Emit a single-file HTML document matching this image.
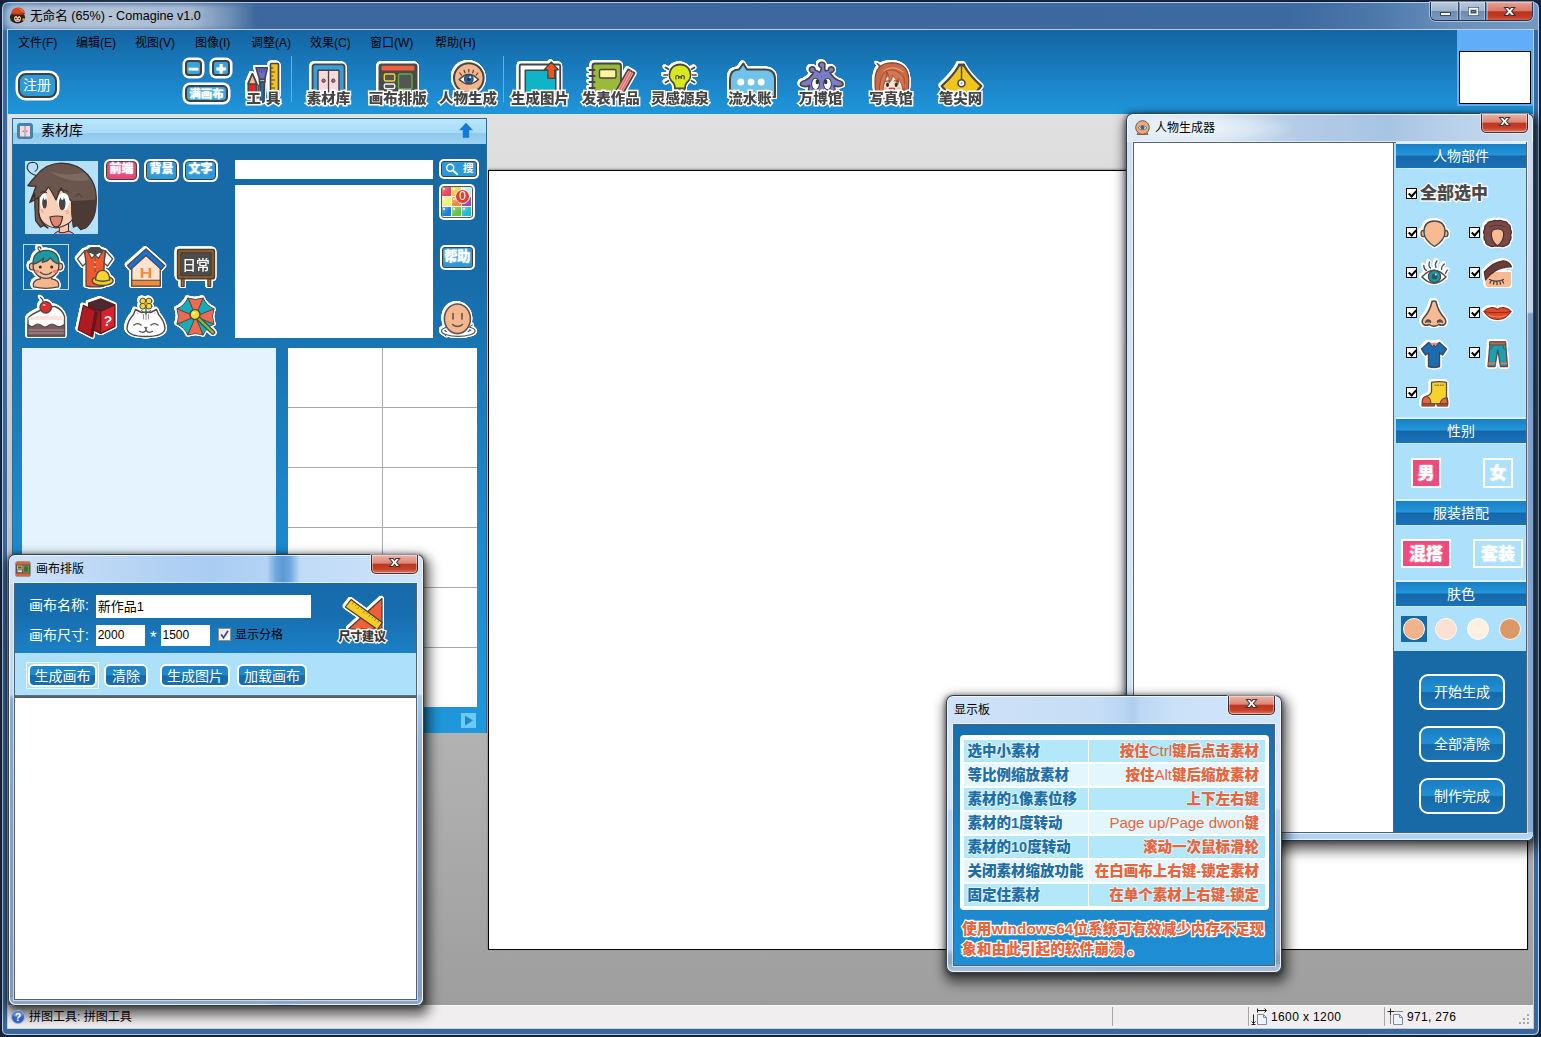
<!DOCTYPE html>
<html lang="zh-CN"><head><meta charset="utf-8"><title>无命名 (65%) - Comagine v1.0</title>
<style>
*{box-sizing:border-box;margin:0;padding:0}
html,body{width:1541px;height:1037px;overflow:hidden;background:#15243c}
body{font-family:"Liberation Sans","Noto Sans CJK SC",sans-serif;font-size:12px;color:#000;position:relative}
.a{position:absolute}
.t{position:absolute;white-space:nowrap}
svg{position:absolute;overflow:visible}
/* main frame */
#frame{position:absolute;left:1px;top:1px;width:1539px;height:1035px;border-radius:7px 7px 6px 6px;background:linear-gradient(90deg,#5a84b3 0,#41699c 40px,#3c689d 300px,#3c699e 1280px,#4b77a9 1370px,#688fbb 1450px,#7499c1 1541px);border:1px solid #101c30;box-shadow:inset 0 0 0 1px rgba(205,228,250,.8)}
#frame .lower{position:absolute;left:1px;right:1px;top:28px;bottom:1px;border-radius:0 0 5px 5px;background:linear-gradient(180deg,#3b699e 0,#3a6698 100%)}
#titleglow{position:absolute;left:3px;top:2px;width:252px;height:26px;border-radius:9px;background:linear-gradient(90deg,rgba(255,255,255,.42) 0,rgba(255,255,255,.56) 10%,rgba(255,255,255,.6) 45%,rgba(255,255,255,.54) 74%,rgba(255,255,255,.26) 89%,rgba(255,255,255,0) 100%);filter:blur(2.5px)}
#title{left:30px;top:8px;font-size:12.6px;line-height:16px;color:#000}
#clientedge{position:absolute;left:7px;top:29px;width:1527px;height:1000px;border:1px solid rgba(190,215,240,.85);background:#a8a8a8}
#toolbar{position:absolute;left:8px;top:30px;width:1525px;height:84px;background:linear-gradient(180deg,#14659f 0,#1567a5 4%,#1a7dc0 50%,#1f96da 100%);box-shadow:0 1px 0 rgba(190,225,248,.75)}
#workspace{position:absolute;left:8px;top:114px;width:1525px;height:891px;background:linear-gradient(180deg,#e1e1e1 0,#9e9e9e 100%)}
#status{position:absolute;left:8px;top:1005px;width:1525px;height:23px;background:#f0eeee;border-top:1px solid #f8f8f8}
.menu{top:36px;font-size:12px;line-height:14px;color:#000}
.cbtn{position:absolute;border:2px solid #3f3f3f;border-radius:6px;box-shadow:0 0 0 2.5px #fff;background:#2b99da;color:#fff;text-align:center}
.tl{position:absolute;top:88px;width:90px;text-align:center;font-size:14.5px;font-weight:900;color:#454545;-webkit-text-stroke:3px #fff;paint-order:stroke fill;line-height:20px;white-space:nowrap;transform:scaleY(.93);transform-origin:50% 85%}
.ol{filter:drop-shadow(1px 0 0 #fff) drop-shadow(-1px 0 0 #fff) drop-shadow(0 1px 0 #fff) drop-shadow(0 -1px 0 #fff) drop-shadow(.8px .8px 0 #fff) drop-shadow(-.8px -.8px 0 #fff)}
.pm{position:absolute;top:-3.6px;width:15px;text-align:center;font-family:"Liberation Sans",sans-serif;font-weight:700;font-size:17px;line-height:20px;color:#fff;-webkit-text-stroke:1.1px #fff}
.sep{position:absolute;width:1px;background:#5ab4ea;top:56px;height:46px}
</style>
<style>
.win{position:absolute;border-radius:7px;border:1px solid rgba(28,38,52,.88);box-shadow:inset 0 0 0 1px rgba(255,255,255,.72),2px 6px 12px 4px rgba(0,0,0,.56),0 1px 4px 1px rgba(0,0,0,.4)}
.wc{position:absolute;border:1px solid #55616e;box-shadow:0 0 0 1px rgba(255,255,255,.55)}
.close{position:absolute;top:0;width:47px;height:19px;border:1px solid rgba(40,30,40,.85);border-top:none;border-radius:0 0 5px 5px;background:linear-gradient(180deg,#ecb4a7 0,#dc8676 45%,#bd3820 52%,#c5402a 78%,#dc745c 100%);box-shadow:inset 0 0 0 1px rgba(255,255,255,.4),0 0 0 1px rgba(255,255,255,.45);color:#fff;text-align:center;font-family:"Liberation Sans",sans-serif;font-weight:700;font-size:12.5px;line-height:15.5px;-webkit-text-stroke:1.8px #4a3030;paint-order:stroke fill}
.close span{display:inline-block;transform:scaleX(1.25)}
.hd{position:absolute;left:1396px;width:130px;height:24px;background:linear-gradient(180deg,#1a7fc4 0,#2396dc 46%,#1667a9 50%,#1a72b6 100%);color:#fff;font-size:14px;line-height:24px;text-align:center;box-shadow:0 -2px 0 #d9f0fd,0 1px 0 #cdeafb}
.cb{position:absolute;width:11px;height:11px;border:1px solid #000;background:#fff}
.cb:after{content:"";position:absolute;left:2.8px;top:-.2px;width:3px;height:6.2px;border:solid #000;border-width:0 2px 2px 0;transform:rotate(42deg)}
.ct{position:absolute;font-size:17px;font-weight:900;line-height:20px;white-space:nowrap}
.sq{position:absolute;border:2.500px solid #fff;color:#fff;font-size:17px;font-weight:900;text-align:center;text-shadow:0 0 2px rgba(255,255,255,.8)}
.bb{position:absolute;border:2px solid #fff;border-radius:9px;background:linear-gradient(180deg,#1b7cc0 0,#2190d6 48%,#1769a8 52%,#1a74b6 100%);color:#fff;font-size:14px;text-align:center;white-space:nowrap}
.sk{position:absolute;top:618px;width:22px;height:22px;border-radius:50%;border:1.500px solid #fffaf5}
.r{position:absolute;left:964px;width:301px;height:22px}
.r i,.r b{position:absolute;top:0;height:22px;font-style:normal;font-weight:900;font-size:14.5px;line-height:22px;white-space:nowrap;paint-order:stroke fill;-webkit-text-stroke:2px rgba(255,255,255,.55)}
.r i{left:0;width:124px;padding-left:3.500px;color:#1f6ea8}
.r b{left:125px;width:176px;text-align:right;padding-right:6px;color:#e8643c}
.r.o i,.r.o b{background:#b3e8fa}
.r.e i,.r.e b{background:#e4f6fd}
.r b u{text-decoration:none;font-weight:500;font-size:15px;-webkit-text-stroke:0}
.lb{position:absolute;color:#fff;font-size:14px;line-height:18px;white-space:nowrap}
.inp{position:absolute;background:#fff;color:#000;white-space:nowrap;padding-left:2px}
.gb{position:absolute;top:664px;height:23px;border:2px solid #fff;border-radius:6px;background:linear-gradient(180deg,#1e83c7 0,#2089cd 45%,#176aa9 52%,#186fae 100%);color:#fff;font-size:14px;line-height:21px;text-align:center;white-space:nowrap}
</style>
</head><body>
<div id="frame"><div class="lower"></div><div id="titleglow"></div></div>
<svg style="left:9px;top:6px" width="18" height="18" viewBox="0 0 18 18"><ellipse cx="8.500" cy="11.300" rx="7.600" ry="6.200" fill="#2a2320"/><path d="M5 12Q5.500 9.500 8.500 9.500Q11.500 9.500 12 12Q12 15.800 8.500 16Q5 15.800 5 12Z" fill="#e9c9ac"/><path d="M4.500 11.500L7 9L8.500 11.500L10.500 9L12.500 11.500L12 8.500H5Z" fill="#2a2320"/><path d="M1.800 8.300Q2.500 1.800 9.300 1.500Q15.800 2 16 8Q10.500 10 1.800 8.300Z" fill="#d8481c"/><path d="M9 2.200Q14 2.500 14.800 6.500Q11.500 4 9 2.200Z" fill="#f0803e"/><path d="M3 7.800Q9 9.300 15.200 7.600" stroke="#7c2408" stroke-width=".9" fill="none"/><circle cx="6.900" cy="12.600" r=".8" fill="#1a1512"/><circle cx="10.300" cy="12.600" r=".8" fill="#1a1512"/><path d="M7.300 14.600H9.900" stroke="#8a5a4a" stroke-width=".7"/><circle cx="14.600" cy="13.600" r="1.400" fill="#c9a227"/></svg>
<div id="title" class="t">无命名 (65%) - Comagine v1.0</div>
<!-- window buttons -->
<div class="a" style="left:1430px;top:2px;width:103px;height:19px;border:1px solid rgba(20,35,60,.85);border-top:none;border-radius:0 0 6px 6px;box-shadow:0 0 0 1px rgba(225,238,250,.55);overflow:hidden">
 <div class="a" style="left:0;top:0;width:28px;height:19px;background:linear-gradient(180deg,#b7c8dc 0,#9fb5cf 45%,#6b8cb3 50%,#7d9cc0 100%);border-right:1px solid rgba(25,40,65,.8);box-shadow:inset 0 0 0 1px rgba(255,255,255,.35)"></div>
 <div class="a" style="left:29px;top:0;width:26px;height:19px;background:linear-gradient(180deg,#b7c8dc 0,#9fb5cf 45%,#6b8cb3 50%,#7d9cc0 100%);border-right:1px solid rgba(25,40,65,.8);box-shadow:inset 0 0 0 1px rgba(255,255,255,.35)"></div>
 <div class="a" style="left:56px;top:0;width:46px;height:19px;background:linear-gradient(180deg,#e6a294 0,#d9786a 45%,#b8331c 52%,#c23c24 78%,#d9694f 100%);box-shadow:inset 0 0 0 1px rgba(255,255,255,.35)"></div>
</div>
<svg style="left:1430px;top:1px" width="105" height="21" viewBox="0 0 105 21"><rect x="10.5" y="11.5" width="10" height="3" fill="#fff" stroke="#3b4a5e" stroke-width="1"/><rect x="38.500" y="6.5" width="10" height="8" fill="none" stroke="#3b4a5e" stroke-width="1"/><rect x="39.5" y="7.5" width="8" height="6" fill="none" stroke="#fff" stroke-width="1.6"/><rect x="41.5" y="9.500" width="4" height="2" fill="none" stroke="#3b4a5e" stroke-width="1"/><text x="79.500" y="14.300" font-size="12.500" font-weight="700" fill="#fff" stroke="#3b2a2a" stroke-width="1.800" paint-order="stroke" text-anchor="middle" font-family="Liberation Sans,sans-serif" transform="translate(79.500 0) scale(1.250 1) translate(-79.500 0)">x</text></svg>
<div id="clientedge"></div>
<div id="toolbar"></div>
<div id="workspace"></div>
<div id="status"></div>
<div class="t menu" style="left:18px">文件(F)</div>
<div class="t menu" style="left:76px">编辑(E)</div>
<div class="t menu" style="left:135px">视图(V)</div>
<div class="t menu" style="left:195px">图像(I)</div>
<div class="t menu" style="left:251px">调整(A)</div>
<div class="t menu" style="left:310px">效果(C)</div>
<div class="t menu" style="left:370px">窗口(W)</div>
<div class="t menu" style="left:435px">帮助(H)</div>
<div class="cbtn" style="left:17.500px;top:72.500px;width:39px;height:25px;border-radius:8px;box-shadow:0 0 0 2.500px #fff;font-size:14px;line-height:20px;border-width:2.500px">注册</div>
<div class="cbtn" style="left:185px;top:60px;width:17px;height:16px;border-radius:4px;background:#38a3de"><span class="pm" style="left:-1px;top:-2.400px">−</span></div>
<div class="cbtn" style="left:212px;top:60px;width:18px;height:16px;border-radius:4px;background:#38a3de"><span class="pm" style="left:-.5px;top:-3.200px">+</span></div>
<div class="cbtn" style="left:185px;top:85px;width:43px;height:17px;border-radius:5px;background:#38a3de;font-size:11.500px;font-weight:900;line-height:14px;letter-spacing:0;text-shadow:0 0 2px #b5e2f8">满画布</div>
<div class="sep" style="left:291px"></div>
<div class="sep" style="left:503px"></div>
<!-- preview -->
<div class="a" style="left:1457px;top:30px;width:76px;height:76px;background:#62adf8"></div>
<div class="a" style="left:1459px;top:51px;width:72px;height:53px;background:#fff;border:1px solid #000"></div>
<!-- 工具 -->
<svg class="ol" style="left:240px;top:55.200px" width="48" height="55" viewBox="240 55 48 55" stroke="#454545" stroke-width="1.6" stroke-linejoin="round">
 <path d="M248.200 98V83L252.400 73.800L256.600 83V98Z" fill="#e6222b"/><path d="M248.200 84L252.400 73.800L256.600 84Z" fill="#f7b99a"/><path d="M256.600 84L258.600 85V98H256.600Z" fill="#8a8a8a" stroke-width="1"/>
 <rect x="270.500" y="63.500" width="8" height="33" rx="1" fill="#f5c21a"/><path d="M270.500 68h3M270.500 72h4.500M270.500 76h3M270.500 80h4.500M270.500 84h3M270.500 88h4.500" stroke-width="1"/>
 <path d="M256 67.800H267.300L264.800 79.500H259.600Z" fill="#6d6cc9"/><path d="M259.300 68v4M261.700 68v5M264.100 68v4" stroke="#4a4aa0" stroke-width="1"/>
 <rect x="259.400" y="79.300" width="5.600" height="2.700" fill="#86d4da"/><path d="M259.800 82H264.600L264 101.500Q262.200 103.500 260.400 101.500Z" fill="#2c62ae"/>
</svg>
<div class="tl" style="left:218.500px;letter-spacing:5px;text-indent:5px">工具</div>
<!-- 素材库 -->
<svg class="ol" style="left:304px;top:56.500px" width="50" height="55" viewBox="304 55 50 55" stroke="#454545" stroke-width="1.800" stroke-linejoin="round">
 <path d="M312.500 98V65Q312.500 62.300 315.200 62.300H341.800Q344.500 62.300 344.500 65V98Z" fill="#3a9ed9"/>
 <rect x="318" y="68.300" width="21" height="30" fill="#fbd7df" stroke-width="1.500"/><path d="M328.500 68.300V98" stroke-width="1.300"/>
 <circle cx="323.600" cy="78.700" r="1.700" fill="#e5527d" stroke-width="1"/><circle cx="333.300" cy="78.700" r="1.700" fill="#e5527d" stroke-width="1"/>
</svg>
<div class="tl" style="left:283.500px">素材库</div>
<!-- 画布排版 -->
<svg class="ol" style="left:372px;top:56.500px" width="52" height="55" viewBox="372 55 52 55" stroke-linejoin="round">
 <rect x="378.500" y="61.500" width="39" height="33" rx="3" fill="#4a4a4a"/>
 <rect x="381.500" y="63.800" width="33" height="4.600" rx="1" fill="#f0603a"/>
 <rect x="384.300" y="72" width="10.500" height="7" rx="1.500" fill="#555" stroke="#f1d23a" stroke-width="1.400"/>
 <rect x="384.300" y="82" width="10.500" height="4.600" rx="1.500" fill="#555" stroke="#f2f2f2" stroke-width="1.400"/>
 <rect x="398.500" y="72" width="13.500" height="15" rx="1.500" fill="#555" stroke="#5fae3a" stroke-width="1.400"/>
</svg>
<div class="tl" style="left:352.700px">画布排版</div>
<!-- 人物生成 -->
<svg class="ol" style="left:445px;top:56px" width="50" height="55" viewBox="444 55 50 55" stroke="#454545" stroke-linejoin="round" stroke-linecap="round">
 <circle cx="467.800" cy="77" r="14.800" fill="#f6b58b" stroke-width="2"/>
 <path d="M458.200 78.500Q467.800 68.500 477.400 78.500Q467.800 87.500 458.200 78.500Z" fill="#fff" stroke-width="1.500"/>
 <circle cx="467.800" cy="78" r="4.300" fill="#1f6db3" stroke-width="1.200"/><circle cx="467.800" cy="78.300" r="1.900" fill="#173c66" stroke="none"/><circle cx="469.200" cy="76.300" r="1" fill="#fff" stroke="none"/>
 <path d="M460.500 74.200L458.800 72M464 71.800L463 69.300M467.800 71V68.300M471.600 71.800L472.600 69.300M475.100 74.200L476.800 72" stroke-width="1.200"/>
</svg>
<div class="tl" style="left:423px">人物生成</div>
<!-- 生成图片 -->
<svg class="ol" style="left:514px;top:56px" width="54" height="55" viewBox="514 55 54 55" stroke="#454545" stroke-linejoin="round">
 <rect x="519.700" y="63.500" width="40.500" height="34" rx="1.500" fill="#fff" stroke-width="1.800"/>
 <rect x="525.300" y="69.300" width="30.500" height="28" fill="#11b4c6" stroke-width="1.500"/>
 <path d="M551.300 61L558.300 68.800H554.700V77.300H547.900V68.800H544.300Z" fill="#f4511e" stroke="#454545" stroke-width="1.300"/>
</svg>
<div class="tl" style="left:495px">生成图片</div>
<!-- 发表作品 -->
<svg class="ol" style="left:584px;top:56px" width="56" height="55" viewBox="584 55 56 55" stroke="#454545" stroke-linejoin="round" stroke-linecap="round">
 <path d="M592.500 97V65Q592.500 62.500 595 62.500H618.500Q621 62.500 621 65V97Z" fill="#9bb93a" stroke-width="1.800"/>
 <rect x="599.500" y="68.500" width="16.500" height="8.500" rx="1.500" fill="#fff59d" stroke-width="1.400"/>
 <path d="M589.500 69h5M589.500 75h5M589.500 81h5M589.500 87h5" stroke-width="2"/>
 <path d="M628.200 68.200L634.600 72L621 96L614.500 92.300Z" fill="#f49a9a" stroke-width="1.600"/><path d="M630.300 69.500L617 93.300M632.400 70.700L619 95" stroke="#d95f5f" stroke-width="1"/>
</svg>
<div class="tl" style="left:565.700px">发表作品</div>
<!-- 灵感源泉 -->
<svg class="ol" style="left:654px;top:57px" width="54" height="55" viewBox="654 55 54 55" stroke="#454545" stroke-linejoin="round" stroke-linecap="round">
 <path d="M680 62.500A10.300 10.300 0 0 1 686.500 81Q685 83 685 86.500H675Q675 83 673.500 81A10.300 10.300 0 0 1 680 62.500Z" fill="#d7e91b" stroke-width="1.800"/>
 <path d="M676 77Q675 73.500 677.200 73.500Q679 73.500 678.700 76.500Q680 72.500 681.300 76.500Q681 73.500 682.800 73.500Q685 73.500 684 77" fill="none" stroke-width="1.200"/>
 <rect x="675.500" y="86.800" width="9" height="3" fill="#d0d0d0" stroke-width="1.300"/><rect x="676.500" y="89.800" width="7" height="3" fill="#666" stroke-width="1.300"/>
 <path d="M665.500 65.500L668.500 67.300M664 73H667.500M665.500 80.500L668.500 78.700M694.500 65.500L691.500 67.300M696 73H692.500M694.500 80.500L691.500 78.700" stroke-width="1.700"/>
</svg>
<div class="tl" style="left:635px">灵感源泉</div>
<!-- 流水账 -->
<svg class="ol" style="left:722px;top:55px" width="58" height="55" viewBox="722 55 58 55" stroke="#454545" stroke-linejoin="round">
 <path d="M739 69.500L743.300 63.500L747 69.500H765Q775 69.500 775 79V97H730V79Q730 69.500 739 69.500Z" fill="#6fc3e9" stroke-width="2"/>
 <circle cx="740.800" cy="82" r="3.500" fill="#fff" stroke="none"/><circle cx="751" cy="82" r="3.500" fill="#fff" stroke="none"/><circle cx="761.200" cy="82" r="3.500" fill="#fff" stroke="none"/>
</svg>
<div class="tl" style="left:705px">流水账</div>
<!-- 万博馆 -->
<svg class="ol" style="left:794px;top:56px" width="56" height="55" viewBox="794 55 56 55" stroke="#454545" stroke-linejoin="round" stroke-linecap="round">
 <path d="M822 98H810Q807 91 809.500 84.500Q804.500 87 800.500 84Q800 80.500 805 79.500Q810.500 77 813.500 71.500Q810.500 71.800 809.500 69.500Q809 66.300 812 65.800Q815.200 65.800 815 69Q817.500 69.500 819.500 71.500Q821.500 69 821.200 66.500Q818.800 66 818.800 63.500Q819.500 60.800 822.500 61.300Q825.500 62 824.800 65Q824.500 67.500 825 69.500Q826.500 70 828.500 69Q828.300 65.800 831.500 65.800Q834.500 66.300 834 69.500Q833 71.800 830 71.500Q833 77 838.500 79.500Q843.500 80.500 843 84Q839 87 834 84.500Q836.500 91 833.500 98Z" fill="#7b7cca" stroke-width="1.600"/>
 <ellipse cx="815.500" cy="83" rx="3.900" ry="5.700" fill="#fff" stroke-width="1.100"/><ellipse cx="827.500" cy="83" rx="3.900" ry="5.700" fill="#fff" stroke-width="1.100"/>
 <ellipse cx="817.300" cy="80.800" rx="1.700" ry="2.500" fill="#333" stroke="none"/><ellipse cx="825.700" cy="80.800" rx="1.700" ry="2.500" fill="#333" stroke="none"/>
 <circle cx="821.500" cy="75.500" r=".7" fill="#5a5aa8" stroke="none"/><circle cx="825.500" cy="74.500" r=".6" fill="#5a5aa8" stroke="none"/><circle cx="817.500" cy="74.500" r=".6" fill="#5a5aa8" stroke="none"/><circle cx="812" cy="88" r=".6" fill="#5a5aa8" stroke="none"/><circle cx="831" cy="89" r=".6" fill="#5a5aa8" stroke="none"/>
</svg>
<div class="tl" style="left:775.500px">万博馆</div>
<!-- 写真馆 -->
<svg class="ol" style="left:866px;top:56px" width="50" height="55" viewBox="866 55 50 55" stroke-linejoin="round" stroke-linecap="round">
 <path d="M892 61.800Q908.800 62 908.800 80Q908.800 92 906.500 98H877.500Q875 92 875 80Q875 61.800 892 61.800Z" fill="#c96a45" stroke="#7a3a26" stroke-width="1.100"/>
 <path d="M880 64.500Q878.500 62.300 876.800 62.500Q879 63.500 879.500 66" fill="#c96a45" stroke="#7a3a26" stroke-width="1"/>
 <path d="M883.300 97V80Q884 75.500 892.500 75.500Q901.700 75.500 901.900 80V97Z" fill="#fde3d3" stroke="none"/>
 <ellipse cx="903.600" cy="84.500" rx="1.900" ry="2.700" fill="#fde3d3" stroke="#b87a60" stroke-width=".7"/>
 <path d="M879.500 92Q878.500 76 886.500 69.500Q887 78 883.500 84.500Q884 90 882.500 97ZM886.500 69.500Q897 66.500 904 77Q905 84 904 90Q902 82 898 77.500Q899 81 898 83.500Q896 77 892.500 74.500Q892.500 79 889 82Q890 76 886.500 69.500Z" fill="#d4764f" stroke="#8c4228" stroke-width=".7"/>
 <path d="M884 70Q893 63.500 903 71" fill="none" stroke="#e8a07a" stroke-width="1.200"/>
 <ellipse cx="887.500" cy="83.800" rx="1.500" ry="2.300" fill="#3a2a22"/><ellipse cx="896.200" cy="83.800" rx="1.500" ry="2.300" fill="#3a2a22"/>
 <path d="M885.300 80.300L889.500 79.800M894.300 79.800L898.500 80.300" stroke="#5a3322" stroke-width=".9"/>
 <path d="M889.300 87.300Q892 86.500 894.800 87.300Q894 90.800 892 90.800Q890 90.800 889.300 87.300Z" fill="#e8503c" stroke="#7a2a1a" stroke-width=".7"/>
 <ellipse cx="885.300" cy="87.300" rx="1.800" ry="1.100" fill="#f7b0a0"/><ellipse cx="898.800" cy="87.300" rx="1.800" ry="1.100" fill="#f7b0a0"/>
</svg>
<div class="tl" style="left:846px">写真馆</div>
<!-- 笔尖网 -->
<svg class="ol" style="left:934px;top:56.500px" width="54" height="55" viewBox="934 55 54 55" stroke="#454545" stroke-linejoin="round" stroke-linecap="round">
 <path d="M959.300 63H963.700Q969.500 73.500 981.300 84L969.500 98H953.500L941.700 84Q953.500 73.500 959.300 63Z" fill="#f1c41b" stroke-width="2.200"/>
 <path d="M959.300 63H963.700" stroke-width="2.800"/>
 <path d="M961.500 65V77.500" stroke-width="1.400"/>
 <circle cx="961.500" cy="81.300" r="3.500" fill="#fff" stroke-width="1.600"/><circle cx="961.500" cy="81.300" r="1.100" fill="#8aa0b8" stroke="none"/>
</svg>
<div class="tl" style="left:915.500px">笔尖网</div>
<!-- docked 素材库 panel -->
<div class="a" style="left:12px;top:118px;width:475px;height:615px;background:linear-gradient(180deg,#176aa5 0,#176aa6 22%,#1a78b7 42%,#1c86ca 62%,#1f95d8 92%,#1f97da 100%);border:1px solid #2b6c96;border-bottom:none"></div>
<div class="a" style="left:13px;top:119px;width:473px;height:25px;background:linear-gradient(180deg,#b9e6fd 0,#a9dcf8 54%,#8fc9ec 56%,#9ed2f1 100%)"></div>

<svg style="left:17px;top:123px" width="16" height="16" viewBox="0 0 16 16"><rect x=".7" y=".7" width="14.600" height="14.600" rx="1.500" fill="#4b86a8" stroke="#3d7290" stroke-width="1"/><rect x="3" y="3" width="4.600" height="10.500" fill="#fbd7df"/><rect x="8.400" y="3" width="4.600" height="10.500" fill="#fbd7df"/><circle cx="6.300" cy="8.200" r=".8" fill="#d9507a"/><circle cx="9.700" cy="8.200" r=".8" fill="#d9507a"/></svg>
<div class="t" style="left:41px;top:122px;font-size:14px;line-height:17px">素材库</div>
<svg style="left:458px;top:122px" width="16" height="17" viewBox="0 0 16 17"><path d="M8 .8L15 8.200H11.200V15.800H4.800V8.200H1Z" fill="#1579da"/></svg>
<!-- avatar -->
<div class="a" style="left:25px;top:161px;width:73px;height:73px;background:#b5e2fa;overflow:hidden">
<svg style="left:0;top:0" width="73" height="73" viewBox="25 161 73 73" stroke="#3a2e2a" stroke-linejoin="round" stroke-linecap="round">
 <path d="M52 236Q58 229 63 231.500Q70 229 76 236Z" fill="#e79ab0" stroke-width="1"/>
 <path d="M59.300 225V232.500Q64 233.500 68.500 231V224Z" fill="#f6c8ae" stroke-width="1"/>
 <path d="M38.500 186V214Q41 226 56 228Q68 226 73 219V184H42Z" fill="#f9cfb8" stroke="none"/><path d="M38.700 213Q41 226 56 228Q68 226 73 219" fill="none" stroke-width="1.100"/>
 <path d="M36.400 175.500Q29.500 174 27.200 168.500Q27 162.500 32.500 162.300Q38 162.500 37.700 167.500Q37.300 170.500 35 171.200" fill="none" stroke-width="1.100"/>
 <path d="M27.800 185.700Q32 180 36.400 175.500Q46 163.500 61 163.200Q78 163.500 88 175Q96.500 185 96.300 198Q96.300 210 93.800 216.500Q90.500 224 85.600 228L80.700 229.600L77.400 225.500L73.300 227.100Q71.200 214 71.600 201Q66 198 61 187.800L56 200Q52 192 48.700 187Q42 197 29.800 202.500Q32 199 34.800 194Q34.500 206 35.600 220.600L40.500 227.100L43.800 225.500L47.900 228Q40 222 38.600 213L38.800 197Q36 199.500 29.800 202.500Q33.500 194 36 186Q31 186.500 27.800 185.700Z" fill="#6a564d" stroke-width="1.200"/>
 <path d="M71.600 201Q84 200.800 96.300 199.500Q96.300 210 93.800 216.500Q90.500 224 85.600 228L80.700 229.600L77.400 225.500L73.300 227.100Q71.200 214 71.600 201Z" fill="#4b3b34" stroke="none"/>
 <path d="M50 171.500Q66 177 84 172.500Q88 176 90 180Q68 184 50 171.500Z" fill="#7c6960" stroke="none"/>
 <path d="M38.700 197.500V213Q39.500 222 47.900 228" fill="none" stroke-width="1.100"/>
 <ellipse cx="43.800" cy="201" rx="3.700" ry="7.500" fill="#fff" stroke="none"/><ellipse cx="63.400" cy="201.500" rx="6" ry="8.800" fill="#fff" stroke="none"/>
 <ellipse cx="44.600" cy="202.800" rx="2.400" ry="5.800" fill="#4a4340" stroke="none"/><ellipse cx="62.200" cy="203.500" rx="3.300" ry="6.800" fill="#4a4340" stroke="none"/>
 <ellipse cx="44.800" cy="198" rx="1.100" ry="1.900" fill="#fff" stroke="none"/><ellipse cx="62.300" cy="197.800" rx="1.400" ry="2.300" fill="#fff" stroke="none"/>
 <path d="M41 192.500Q43.500 190.500 46.500 192.500M58 191.500Q63 188.500 68.500 192" fill="none" stroke="#4a3a34" stroke-width="1.300"/>
 <path d="M41 209.800L43 210.500M41.500 211.800L43.300 212.200M66 211.500L68.500 211M66.500 213.300L69 213" stroke="#d8907a" stroke-width=".8"/>
 <path d="M49.900 217Q56 215.300 62.600 216.500Q61.500 226.500 56 227.200Q51.500 226.500 49.900 217Z" fill="#e08674" stroke-width="1.200"/>
 <path d="M76 196.500L78.500 193L82 197.500" fill="none" stroke="#4a3a34" stroke-width=".9"/>
</svg></div>
<!-- tab buttons -->
<div class="cbtn" style="left:106px;top:161px;width:31px;height:19px;border-radius:4px;border-width:1.800px;box-shadow:0 0 0 2px #fff;background:#e8467b;font-size:12px;font-weight:900;line-height:15px;text-shadow:0 0 2px #ffd0e0">前端</div>
<div class="cbtn" style="left:146px;top:161px;width:31px;height:19px;border-radius:4px;border-width:1.800px;box-shadow:0 0 0 2px #fff;font-size:12px;font-weight:900;line-height:15px;text-shadow:0 0 2px #c8ecff">背景</div>
<div class="cbtn" style="left:185px;top:161px;width:31px;height:19px;border-radius:4px;border-width:1.800px;box-shadow:0 0 0 2px #fff;font-size:12px;font-weight:900;line-height:15px;text-shadow:0 0 2px #c8ecff">文字</div>
<!-- search + list -->
<div class="a" style="left:235px;top:160px;width:198px;height:19px;background:#fff"></div>
<div class="a" style="left:235px;top:185px;width:198px;height:153px;background:#fff"></div>
<div class="cbtn" style="left:441px;top:161px;width:36px;height:16px;border-radius:3px;border-width:1.800px;box-shadow:0 0 0 2px #fff;font-size:10.500px;font-weight:700;line-height:12px;text-align:right;padding-right:2.500px">搜</div>
<svg style="left:443px;top:162px" width="18" height="14" viewBox="0 0 18 14" fill="none" stroke="#fff" stroke-width="1.500" stroke-linecap="round"><circle cx="7.200" cy="5.800" r="3.500"/><path d="M10 8.600L14.200 12.200" stroke-width="2"/></svg>
<!-- palette icon -->
<div class="a" style="left:441px;top:186px;width:32px;height:32px;border:1.500px solid #4a5a68;border-radius:3px;box-shadow:0 0 0 2px #fff;overflow:hidden;background:#fff"><div class="a" style="left:0px;top:0px;width:9px;height:9px;background:linear-gradient(135deg,rgba(255,255,255,.35) 0,rgba(255,255,255,0) 60%),#e8465a"><div class="a" style="left:1px;top:1px;width:1.500px;height:1.500px;background:#fff;border-radius:1px"></div></div><div class="a" style="left:10px;top:0px;width:9px;height:9px;background:linear-gradient(135deg,rgba(255,255,255,.35) 0,rgba(255,255,255,0) 60%),#f3cf3a"><div class="a" style="left:1px;top:1px;width:1.500px;height:1.500px;background:#fff;border-radius:1px"></div></div><div class="a" style="left:20px;top:0px;width:9px;height:9px;background:linear-gradient(135deg,rgba(255,255,255,.35) 0,rgba(255,255,255,0) 60%),#bfe9f1"><div class="a" style="left:1px;top:1px;width:1.500px;height:1.500px;background:#fff;border-radius:1px"></div></div><div class="a" style="left:0px;top:10px;width:9px;height:9px;background:linear-gradient(135deg,rgba(255,255,255,.35) 0,rgba(255,255,255,0) 60%),#eef07a"><div class="a" style="left:1px;top:1px;width:1.500px;height:1.500px;background:#fff;border-radius:1px"></div></div><div class="a" style="left:10px;top:10px;width:9px;height:9px;background:linear-gradient(135deg,rgba(255,255,255,.35) 0,rgba(255,255,255,0) 60%),#f08a3a"><div class="a" style="left:1px;top:1px;width:1.500px;height:1.500px;background:#fff;border-radius:1px"></div></div><div class="a" style="left:20px;top:10px;width:9px;height:9px;background:linear-gradient(135deg,rgba(255,255,255,.35) 0,rgba(255,255,255,0) 60%),#a04ab8"><div class="a" style="left:1px;top:1px;width:1.500px;height:1.500px;background:#fff;border-radius:1px"></div></div><div class="a" style="left:0px;top:20px;width:9px;height:9px;background:linear-gradient(135deg,rgba(255,255,255,.35) 0,rgba(255,255,255,0) 60%),#1b7fd6"><div class="a" style="left:1px;top:1px;width:1.500px;height:1.500px;background:#fff;border-radius:1px"></div></div><div class="a" style="left:10px;top:20px;width:9px;height:9px;background:linear-gradient(135deg,rgba(255,255,255,.35) 0,rgba(255,255,255,0) 60%),#6cc04a"><div class="a" style="left:1px;top:1px;width:1.500px;height:1.500px;background:#fff;border-radius:1px"></div></div><div class="a" style="left:20px;top:20px;width:9px;height:9px;background:linear-gradient(135deg,rgba(255,255,255,.35) 0,rgba(255,255,255,0) 60%),#22bcc8"><div class="a" style="left:1px;top:1px;width:1.500px;height:1.500px;background:#fff;border-radius:1px"></div></div></div>
<div class="a" style="left:455px;top:188.500px;width:15px;height:15px;border-radius:50%;background:#e63a2e;border:1.500px solid #fff;color:#fff;font-size:12.500px;line-height:12px;text-align:center;font-weight:400">0</div>
<div class="cbtn" style="left:441.500px;top:247px;width:31px;height:21px;border-radius:3px;border-width:1.800px;box-shadow:0 0 0 2px #fff;font-size:13.500px;font-weight:900;line-height:17px;letter-spacing:-.5px;text-shadow:0 0 2px #c8ecff">帮助</div>
<!-- smiley -->
<svg class="ol" style="left:436px;top:299px" width="44" height="42" viewBox="436 299 44 42" stroke="#555" stroke-linejoin="round" stroke-linecap="round">
 <ellipse cx="458.300" cy="331" rx="16.800" ry="5.300" fill="none" stroke-width="1.200"/><path d="M470 326.500L472.500 325M444.500 334.500L446 335.800" stroke-width="1"/>
 <ellipse cx="457.400" cy="318.800" rx="13" ry="14.800" fill="#f6b78e" stroke-width="1.600"/>
 <path d="M453 313.500V319M462 313.500V319" stroke-width="1.600"/><path d="M452.500 324.500Q457.500 328.500 462.500 324.500" fill="none" stroke-width="1.500"/>
</svg>
<!-- lower panes -->
<div class="a" style="left:22px;top:348px;width:254px;height:359px;background:#e4f3fd"></div>
<div class="a" style="left:288px;top:348px;width:189px;height:359px;background:#fff;background-image:linear-gradient(#a9a9a9,#a9a9a9),linear-gradient(#a9a9a9,#a9a9a9),linear-gradient(#a9a9a9,#a9a9a9),linear-gradient(#a9a9a9,#a9a9a9),linear-gradient(#a9a9a9,#a9a9a9),linear-gradient(#a9a9a9,#a9a9a9);background-repeat:no-repeat;background-size:1px 100%,100% 1px,100% 1px,100% 1px,100% 1px,100% 1px;background-position:94px 0,0 59px,0 119px,0 179px,0 239px,0 299px"></div>
<div class="a" style="left:461px;top:713px;width:15px;height:15px;background:#6ccbf6"></div>
<svg style="left:461px;top:713px" width="15" height="15" viewBox="0 0 15 15"><path d="M4 2.500L12 7.500L4 12.500Z" fill="#208ac6"/></svg>
<!-- category icons -->
<div class="a" style="left:23px;top:244px;width:46px;height:46px;border:1px solid #b5e2fa"></div>
<svg class="ol" style="left:23px;top:244px" width="46" height="46" viewBox="23 244 46 46" stroke="#4a4a4a" stroke-linejoin="round" stroke-linecap="round"><g transform="translate(46 267) scale(.95) translate(-46 -267)">
 <path d="M33 288Q31 281 40 279.500V276H52V279.500Q61 281 59 288Q46 291 33 288Z" fill="#f6b58b" stroke-width="1.400"/>
 <ellipse cx="31.500" cy="266.500" rx="3" ry="3.600" fill="#f6b58b" stroke-width="1.300"/><ellipse cx="60.500" cy="266.500" rx="3" ry="3.600" fill="#f6b58b" stroke-width="1.300"/>
 <ellipse cx="46" cy="266" rx="13.500" ry="13" fill="#f8bf98" stroke-width="1.400"/>
 <path d="M32.300 264Q32 250 46 249.500Q60 250 59.700 264Q54 262.500 50.500 257.500Q48 261.500 42 262Q43.500 259.500 43.500 257.500Q39 262.500 32.300 264Z" fill="#1a9ba3" stroke-width="1.400"/>
 <path d="M40 251Q36 247 38.500 245.800Q41 245.500 40.500 248" fill="none" stroke-width="1.300"/>
 <circle cx="40" cy="267" r="1.600" fill="#333" stroke="none"/><circle cx="52" cy="267" r="1.600" fill="#333" stroke="none"/>
 <ellipse cx="36.500" cy="271.500" rx="2.600" ry="1.700" fill="#f0806a" stroke="none"/><ellipse cx="55.500" cy="271.500" rx="2.600" ry="1.700" fill="#f0806a" stroke="none"/>
 <path d="M40 272.500Q46 277.500 52 272.500" fill="none" stroke-width="1.300"/>
</g></svg>
<svg class="ol" style="left:73px;top:244px" width="46" height="46" viewBox="73 244 46 46" stroke="#4a4a4a" stroke-linejoin="round" stroke-linecap="round"><g transform="translate(96 267) scale(.95) translate(-96 -267)">
 <path d="M84 250L76.500 258.500L82 266L86 262.500Z" fill="#fff" stroke-width="1.400"/><path d="M106 250L113.500 258.500L108 266L104 262.500Z" fill="#fff" stroke-width="1.400"/>
 <path d="M84 250Q95 246 106 250L104.500 262.500V287Q95 289 85.500 287V262.500Z" fill="#f0582c" stroke-width="1.400"/>
 <path d="M88 248.500L95 255L102 248.500L99.500 246.500H90.500Z" fill="#4a4a4a" stroke-width="1"/><path d="M86.500 249.500L91.500 258L95 254ZM103.500 249.500L98.500 258L95 254Z" fill="#fff" stroke-width="1.200"/>
 <circle cx="95" cy="262" r="1.100" fill="#fff" stroke="none"/><circle cx="95" cy="267" r="1.100" fill="#fff" stroke="none"/><path d="M95 255V272" stroke-width=".8"/>
 <ellipse cx="103" cy="281.500" rx="11" ry="5" fill="#f4cb1f" stroke-width="1.400"/><path d="M95.500 280.500Q96 270.500 103 270.500Q110 270.500 110.500 280.500Q103 283.500 95.500 280.500Z" fill="#f6d331" stroke-width="1.400"/>
</g></svg>
<svg class="ol" style="left:123px;top:244px" width="46" height="46" viewBox="123 244 46 46" stroke="#4a4a4a" stroke-linejoin="round" stroke-linecap="round"><g transform="translate(146 267) scale(.95) translate(-146 -267)">
 <path d="M131 265L146 252L161 265V287H131Z" fill="#fde2d0" stroke-width="1.400"/>
 <path d="M131 281H161V287H131Z" fill="#f28a3a" stroke-width="1.200"/>
 <path d="M146 248L165.500 265.500L162 269.500L146 255L130 269.500L126.500 265.500Z" fill="#1a6fd2" stroke-width="1.400"/>
 <text x="146" y="278.400" font-size="15.800" font-weight="700" fill="#f28a3a" stroke="none" text-anchor="middle" font-family="Liberation Sans,sans-serif" transform="translate(146 0) scale(1.180 1) translate(-146 0)">H</text>
</g></svg>
<svg class="ol" style="left:173px;top:244px" width="46" height="46" viewBox="173 244 46 46" stroke="#4a3a2a" stroke-linejoin="round"><g transform="translate(196 267) scale(.95) translate(-196 -267)">
 <path d="M180.500 279V287.500H183.500V279ZM208.500 279V287.500H211.500V279Z" fill="#9a6a3a" stroke-width="1.200"/>
 <rect x="176.500" y="248.500" width="39" height="31" rx="2" fill="#8a5a2b" stroke-width="1.400"/>
 <rect x="180" y="252" width="32" height="24" fill="#4c4c4c" stroke-width="1"/>
 <text x="196" y="270" font-size="14.500" fill="#fff" stroke="none" text-anchor="middle" font-weight="500" font-family="Liberation Sans,Noto Sans CJK SC,sans-serif">日常</text>
</g></svg>
<svg class="ol" style="left:23px;top:294px" width="46" height="46" viewBox="23 294 46 46" stroke="#4a4a4a" stroke-linejoin="round" stroke-linecap="round">
 <path d="M28 336V318.500Q29 315.500 40 310.500Q50 306.300 55 306.500Q62.500 309.500 64.500 316.500V336Z" fill="#fff" stroke-width="1.400"/>
 <path d="M28.500 317.500Q45 314 64 316.800V320H28.500Z" fill="#fbe3e0" stroke="none"/>
 <path d="M28 324.500Q31 328 34.500 325.500Q38 322.500 41.500 325.500Q45 328.500 48.500 325.500Q52 322.500 55.500 325.500Q59 328.500 64.500 324.500V336H28Z" fill="#7a5a5e" stroke-width="1.200"/>
 <path d="M28.500 330H64M28.500 333H64" stroke="#b89898" stroke-width=".9"/>
 <path d="M43.500 302Q42.500 298.500 40.500 297.500" fill="none" stroke-width="1.300"/>
 <circle cx="45.700" cy="307.300" r="5.700" fill="#e32a26" stroke-width="1.400"/><ellipse cx="44" cy="305" rx="1.600" ry="1.100" fill="#f7a09a" stroke="none"/>
</svg>
<svg class="ol" style="left:73px;top:294px" width="46" height="46" viewBox="73 294 46 46" stroke="#5a1a1a" stroke-linejoin="round"><g transform="translate(96 317.500) scale(.94) translate(-96 -316.500)">
 <path d="M88 301L101 296.500L116 303V326L101 333.500L88 327Z" fill="#4a2a30" stroke-width="1.200"/>
 <path d="M88 304.500L101 310V333.500L88 327Z" fill="#a3161c" stroke-width="1.200"/><path d="M101 310L116 303V326L101 333.500Z" fill="#d8232e" stroke-width="1.200"/>
 <path d="M82.500 303.500L95.500 309.500L90.500 336.500L77 329.500Z" fill="#b01a22" stroke-width="1.200"/><path d="M95.500 309.500L97.500 311L92.500 337.500L90.500 336.500Z" fill="#7a1016" stroke-width="1"/>
 <text x="108.500" y="325.500" font-size="15" font-weight="900" fill="#fff" stroke="none" text-anchor="middle" transform="rotate(8 108 320)" font-family="Liberation Sans,sans-serif">?</text></g>
</svg>
<svg class="ol" style="left:123px;top:294px" width="46" height="46" viewBox="123 294 46 46" stroke="#4a4a4a" stroke-linejoin="round" stroke-linecap="round">
 <path d="M127 328.500Q127.500 321 133.500 314.500L135.500 309.500L141.500 312.500Q146 311.500 150.500 312.500L156.500 309.500L158.500 314.500Q164.500 321 165 328.500Q164 336.500 146 336.500Q128 336.500 127 328.500Z" fill="#fff" stroke-width="1.400"/>
 <path d="M136.300 312L137.300 314.500L139 313.300ZM155.700 312L154.700 314.500L153 313.300Z" fill="#f7b0b8" stroke="none"/>
 <path d="M134 325Q137.500 322.300 141 325M151 325Q154.500 322.300 158 325" fill="none" stroke-width="1.300"/>
 <path d="M146 328V330.300M146 330.300Q143.500 333.800 139.500 331.300M146 330.300Q148.500 333.800 152.500 331.300" fill="none" stroke-width="1.200"/><path d="M144.800 327.300H147.200L146 328.600Z" fill="#f08aa0" stroke-width=".8"/>
 <path d="M143.500 314.500V319M146 314V319.500M148.500 314.500V319" stroke="#9a7a7a" stroke-width=".9"/>
 <path d="M146 314V307" stroke="#3a6a4a" stroke-width="1.300"/><path d="M146 313Q142.500 312.500 141.500 310.500M146 313Q149.500 312.500 150.500 310.500" fill="none" stroke="#3a6a4a" stroke-width="1.200"/>
 <circle cx="142.800" cy="301" r="2.900" fill="#f6d92a" stroke-width="1"/><circle cx="149" cy="301" r="2.900" fill="#f6d92a" stroke-width="1"/><circle cx="142.800" cy="306.200" r="2.900" fill="#f6d92a" stroke-width="1"/><circle cx="149" cy="306.200" r="2.900" fill="#f6d92a" stroke-width="1"/><circle cx="145.900" cy="303.600" r="1.400" fill="#e8a81a" stroke="none"/>
</svg>
<svg class="ol" style="left:173px;top:294px" width="46" height="46" viewBox="173 294 46 46" stroke="#4a4a4a" stroke-linejoin="round" stroke-linecap="round">
 <g transform="translate(195.500 316.500)">
 <path d="M0 0L-7.600 -18.400Q0 -15.500 7.600 -18.400Z" fill="#ef6a50" stroke-width="1"/><path d="M0 0L7.600 -18.400Q11 -11 18.400 -7.600Z" fill="#1aabb6" stroke-width="1"/>
 <path d="M0 0L18.400 -7.600Q15.500 0 18.400 7.600Z" fill="#ef6a50" stroke-width="1"/><path d="M0 0L18.400 7.600Q11 11 7.600 18.400Z" fill="#1aabb6" stroke-width="1"/>
 <path d="M0 0L7.600 18.400Q0 15.500 -7.600 18.400Z" fill="#ef6a50" stroke-width="1"/><path d="M0 0L-7.600 18.400Q-11 11 -18.400 7.600Z" fill="#1aabb6" stroke-width="1"/>
 <path d="M0 0L-18.400 7.600Q-15.500 0 -18.400 -7.600Z" fill="#ef6a50" stroke-width="1"/><path d="M0 0L-18.400 -7.600Q-11 -11 -7.600 -18.400Z" fill="#1aabb6" stroke-width="1"/>
 </g>
 <path d="M198 318L213 332.500" stroke-width="4.600"/><path d="M198 318L213 332.500" stroke="#7ac142" stroke-width="2.400"/>
 <circle cx="195" cy="314.500" r="5" fill="#f6d92a" stroke-width="1.400"/><circle cx="193.800" cy="313.200" r="1.500" fill="#fdf3a0" stroke="none"/>
</svg>
<!-- canvas -->
<div class="a" style="left:488px;top:170px;width:1040px;height:780px;background:#fff;border:1px solid #000;box-shadow:0 -1px 2px rgba(0,0,0,.35)"></div>
<!-- 人物生成器 window -->
<div class="win" style="left:1126px;top:113px;width:408px;height:728px;background:linear-gradient(180deg,rgba(255,255,255,.0) 0,rgba(255,255,255,0) 28px,rgba(255,255,255,0) 100%),linear-gradient(90deg,#dfeaf6 0,#d3e2f2 90px,#b4cce7 170px,#a8c4e3 260px,#bdd3ea 340px,#c9daee 406px)">
 <div class="a" style="left:0;top:28px;width:7px;bottom:8px;background:linear-gradient(180deg,#d0e0f2 0,#d6e6f8 300px,#cfe3f9 100%)"></div>
 <div class="a" style="right:0;top:28px;width:7px;bottom:8px;background:linear-gradient(180deg,#cfdcec 0,#c3d3e8 170px,#7f9fc8 172px,#8aa8cf 100%)"></div>
 <div class="a" style="left:0;right:0;bottom:0;height:8px;border-radius:0 0 6px 6px;background:linear-gradient(180deg,#a9d0f6 0,#b4d7f9 100%);box-shadow:inset 0 -1px 0 rgba(255,255,255,.7)"></div>
 <div class="a" style="left:14px;top:-1px;width:150px;height:28px;background:radial-gradient(ellipse at 40% 55%,rgba(255,255,255,.6) 0,rgba(255,255,255,.3) 45%,rgba(255,255,255,0) 75%)"></div>
 <div class="close" style="right:5px"><span>x</span></div>
</div>
<svg style="left:1134px;top:120px" width="17" height="17" viewBox="0 0 17 17" stroke="#6a5a4a" stroke-linejoin="round"><path d="M3 14.500L5 11H12L14 14.500Z" fill="#e89a6a" stroke-width=".8"/><circle cx="8.500" cy="7.500" r="6.800" fill="#f2a878" stroke-width="1"/><path d="M4 7.800Q8.500 3.300 13 7.800Q8.500 12 4 7.800Z" fill="#fff" stroke-width=".8"/><circle cx="8.500" cy="7.600" r="2.100" fill="#2a6aa8" stroke="none"/></svg>
<div class="t" style="left:1155px;top:121px;font-size:12px;line-height:15px">人物生成器</div>
<div class="wc" style="left:1133px;top:142px;width:394px;height:691px;background:#fff"></div>
<div class="a" style="left:1393px;top:143px;width:1px;height:689px;background:#4f6474"></div>
<div class="a" style="left:1394px;top:143px;width:132px;height:508px;background:#ade0fb"></div>
<div class="a" style="left:1394px;top:651px;width:132px;height:181px;background:#176aa5"></div>
<div class="hd" style="top:144px">人物部件</div>
<div class="hd" style="top:419px">性别</div>
<div class="hd" style="top:501px">服装搭配</div>
<div class="hd" style="top:582px">肤色</div>
<div class="cb" style="left:1406px;top:188px"></div>
<div class="ct" style="left:1420px;top:184px;color:#4a4a4a;-webkit-text-stroke:2.500px #fff;paint-order:stroke fill">全部选中</div>
<div class="cb" style="left:1406px;top:227px"></div><div class="cb" style="left:1469px;top:227px"></div>
<div class="cb" style="left:1406px;top:267px"></div><div class="cb" style="left:1469px;top:267px"></div>
<div class="cb" style="left:1406px;top:307px"></div><div class="cb" style="left:1469px;top:307px"></div>
<div class="cb" style="left:1406px;top:347px"></div><div class="cb" style="left:1469px;top:347px"></div>
<div class="cb" style="left:1406px;top:387px"></div>
<div class="sq" style="left:1411px;top:457.500px;width:30px;height:30px;background:#f0497b;line-height:28px">男</div>
<div class="sq" style="left:1483px;top:457.500px;width:30px;height:30px;line-height:28px">女</div>
<div class="sq" style="left:1401px;top:538.500px;width:50px;height:29.500px;background:#f0497b;line-height:27px">混搭</div>
<div class="sq" style="left:1473px;top:538.500px;width:50px;height:29.500px;line-height:27px">套装</div>
<div class="a" style="left:1401px;top:616px;width:26px;height:26px;background:#176aa5"></div>
<div class="sk" style="left:1403px;background:#efb48c"></div>
<div class="sk" style="left:1435px;background:#fce0d2"></div>
<div class="sk" style="left:1467px;background:#fdf0e0"></div>
<div class="sk" style="left:1499px;background:#dd9868"></div>
<div class="bb" style="left:1419px;top:674px;width:86px;height:36px;line-height:33px">开始生成</div>
<div class="bb" style="left:1419px;top:726px;width:86px;height:36px;line-height:33px">全部清除</div>
<div class="bb" style="left:1419px;top:778px;width:86px;height:36px;line-height:33px">制作完成</div>
<!-- part icons -->
<svg class="ol" style="left:1418px;top:218px" width="32" height="32" viewBox="1418 218 32 32" stroke="#4a4a4a" stroke-linejoin="round" stroke-linecap="round">
 <ellipse cx="1423.300" cy="233.500" rx="2.300" ry="3.200" fill="#f6b58b" stroke-width="1.300"/><ellipse cx="1445.700" cy="233.500" rx="2.300" ry="3.200" fill="#f6b58b" stroke-width="1.300"/>
 <path d="M1434.500 221Q1445 221 1445 232Q1445 240 1434.500 246.500Q1424 240 1424 232Q1424 221 1434.500 221Z" fill="#f8ba92" stroke-width="1.400"/>
</svg>
<svg class="ol" style="left:1481px;top:218px" width="34" height="32" viewBox="1481 218 34 32" stroke="#4a3030" stroke-linejoin="round" stroke-linecap="round">
 <path d="M1497.500 220.800Q1500.500 219.500 1503 221.500Q1506.500 221 1508 224Q1511 225.500 1510.300 229Q1512.300 232 1510.500 235Q1512 238.500 1509.500 241Q1509.500 244.500 1506 245.300Q1503.500 247.500 1500.500 246H1494.500Q1491.500 247.500 1489 245.300Q1485.500 244.500 1485.500 241Q1483 238.500 1484.500 235Q1482.700 232 1484.700 229Q1484 225.500 1487 224Q1488.500 221 1492 221.500Q1494.500 219.500 1497.500 220.800Z" fill="#7a4a48" stroke-width="1.300"/>
 <path d="M1491.300 234Q1491.300 229 1497.500 229Q1503.700 229 1503.700 234Q1503.700 241.500 1497.500 246Q1491.300 241.500 1491.300 234Z" fill="#f8ba92" stroke-width="1.200"/>
 <path d="M1489.500 227Q1497.500 223 1505.500 227" fill="none" stroke="#5a3230" stroke-width="1"/>
</svg>
<svg class="ol" style="left:1418px;top:258px" width="32" height="32" viewBox="1418 258 32 32" stroke="#4a4a4a" stroke-linejoin="round" stroke-linecap="round">
 <path d="M1422 277Q1434 263.500 1446 277Q1434 289.500 1422 277Z" fill="#fff" stroke-width="1.500"/>
 <circle cx="1434.500" cy="276.500" r="6.100" fill="#1a98a8" stroke-width="1.300"/><circle cx="1434.500" cy="276.500" r="3" fill="#2a5a68" stroke="none"/><circle cx="1435.800" cy="274.600" r="1" fill="#bfeef2" stroke="none"/>
 <path d="M1426.500 270.500Q1423.500 268.500 1423.800 265.500M1430.500 268Q1428 265.500 1429.500 262M1436 267.500Q1434.500 264 1437 261M1441.500 269.500Q1441.500 266 1444.500 264M1445.500 273.500Q1446.500 270.500 1447.800 270" fill="none" stroke-width="1.300"/>
</svg>
<svg class="ol" style="left:1481px;top:258px" width="34" height="32" viewBox="1481 258 34 32" stroke="#4a3030" stroke-linejoin="round" stroke-linecap="round">
 <path d="M1485.500 272H1511V284Q1511 287 1508 287H1488.500Q1485.500 287 1485.500 284Z" fill="#f8ba92" stroke="none"/>
 <path d="M1484.300 272Q1493 262 1503 260.800Q1509.500 261 1511.500 266.800Q1503 266.500 1496 270.500Q1490 274 1485.500 280Z" fill="#6a3c3a" stroke-width="1.200"/>
 <path d="M1489.500 279.500Q1496.500 283 1503.500 279.500M1491 281L1490 283M1494 282L1493.500 284.200M1497 282.300V284.500M1500 282L1500.500 284.200M1502.500 281L1503.500 283" fill="none" stroke="#4a3a3a" stroke-width="1.300"/>
</svg>
<svg class="ol" style="left:1418px;top:298px" width="32" height="32" viewBox="1418 298 32 32" stroke="#4a4a4a" stroke-linejoin="round" stroke-linecap="round">
 <path d="M1432 301.500Q1434 300.500 1436 301.500Q1438 311 1444 317.500Q1447.500 321.500 1444.500 324.500Q1441.500 326 1439 324.500Q1434 328 1429 324.500Q1426.500 326 1423.500 324.500Q1420.500 321.500 1424 317.500Q1430 311 1432 301.500Z" fill="#f8ba92" stroke-width="1.500"/>
 <path d="M1425.500 322.500Q1426 319.500 1429 320Q1431 320.500 1430.500 322.500M1442.500 322.500Q1442 319.500 1439 320Q1437 320.500 1437.500 322.500" fill="#5a4a48" stroke-width="1.100"/>
</svg>
<svg class="ol" style="left:1481px;top:298px" width="34" height="32" viewBox="1481 298 34 32" stroke="#8a2a1a" stroke-linejoin="round" stroke-linecap="round">
 <path d="M1484 311.500Q1487 308 1492 307.500Q1495.500 307.500 1497.500 309.500Q1499.500 307.500 1503 307.500Q1508 308 1511 311.500Q1506 319.500 1497.500 319.500Q1489 319.500 1484 311.500Z" fill="#e04a2a" stroke-width="1.100"/>
 <path d="M1484 311.500Q1491 313.500 1497.500 312.500Q1504 313.500 1511 311.500" fill="none" stroke-width="1"/>
 <path d="M1489 315.500Q1497.500 318.500 1506 315.500" fill="none" stroke="#f08a6a" stroke-width="1"/>
</svg>
<svg class="ol" style="left:1418px;top:338px" width="32" height="32" viewBox="1418 338 32 32" stroke="#3a4a5a" stroke-linejoin="round" stroke-linecap="round">
 <path d="M1428.500 342.500L1421.500 349L1425.500 355L1428.500 353V366.500Q1434 368.500 1439.500 366.500V353L1442.500 355L1446.500 349L1439.500 342.500Q1434 346.500 1428.500 342.500Z" fill="#1c6cb0" stroke-width="1.400"/>
 <path d="M1429.500 342.800L1432.500 346.800L1434 344.800L1435.500 346.800L1438.500 342.800" fill="#f08a8a" stroke-width=".9"/>
</svg>
<svg class="ol" style="left:1481px;top:338px" width="34" height="32" viewBox="1481 338 34 32" stroke="#5a4a4a" stroke-linejoin="round" stroke-linecap="round">
 <path d="M1490 342H1505.500L1507.500 366.500H1500.500L1497.750 350L1495 366.500H1488Z" fill="#1aa0b0" stroke-width="1.300"/>
 <path d="M1490 342H1505.500L1505.800 345H1489.700Z" fill="#b86a4a" stroke-width="1"/>
 <path d="M1488.300 363.500H1495.400M1500.300 363.500H1507.300" stroke="#e07050" stroke-width="2.200" stroke-linecap="butt"/>
 <path d="M1492.500 346Q1492 349 1490.500 350M1503 346Q1503.500 349 1505 350" fill="none" stroke-width=".9"/>
</svg>
<svg class="ol" style="left:1418px;top:378px" width="32" height="32" viewBox="1418 378 32 32" stroke="#5a4a3a" stroke-linejoin="round" stroke-linecap="round"><g transform="translate(0 381) scale(1 .93) translate(0 -381)">
 <path d="M1431.500 382.500Q1439 381 1446.500 382.500V398Q1447.800 400 1447.800 405.500H1422.500Q1421.500 399.500 1426 397.500Q1431 396 1431.500 392Z" fill="#f6d32a" stroke-width="1.300"/>
 <path d="M1422.500 405.500Q1421.500 399.500 1426 397.500Q1430.500 398 1431 405.500Z" fill="#f0603a" stroke-width="1.100"/>
 <path d="M1440 405.500Q1441 400 1446 399Q1447.500 401 1447.500 405.500Z" fill="#f0603a" stroke-width="1.100"/>
 <path d="M1422.300 405.500H1434.500V408H1422.300ZM1437.500 405.500H1447.700V408H1437.500Z" fill="#c84a2a" stroke-width="1"/>
 <path d="M1435 385.500H1443.500" stroke-dasharray="1 1.600" stroke-width="1"/>
</g></svg>
<!-- 显示板 window -->
<div class="win" style="left:946px;top:695px;width:336px;height:278px;background:linear-gradient(90deg,#cfe3f8 0,#c6ddf6 150px,#b9d5f3 178px,#b0cdee 186px,#bdd8f4 194px,#cbe1f8 230px,#d2e6fa 336px)">
 <div class="a" style="left:1px;top:29px;width:6px;bottom:7px;background:linear-gradient(180deg,#d3e6fa 0,#cfe3fa 83px,#b9d5f5 86px,#b7d4f5 224px,#94acc9 230px,#8ea6c3 100%)"></div>
 <div class="a" style="right:1px;top:29px;width:6px;bottom:7px;background:linear-gradient(180deg,#d6e8fb 0,#cfe3fa 83px,#b7d4f5 86px,#a3c2e8 150px,#8fb0d8 224px,#879fbe 231px,#869ebc 100%)"></div>
 <div class="a" style="left:1px;right:1px;bottom:1px;height:7px;border-radius:0 0 6px 6px;background:linear-gradient(180deg,#9bb3d0,#a9c0dc)"></div>
 <div class="close" style="right:6px"><span>x</span></div>
</div>
<div class="t" style="left:954px;top:703px;font-size:12px;line-height:15px">显示板</div>
<div class="wc" style="left:953px;top:724px;width:322px;height:242px;background:linear-gradient(180deg,#176fae 0,#1c86cb 60%,#1f8fd5 100%)"></div>
<div class="a" style="left:960px;top:735px;width:309px;height:175px;background:#fff;border-radius:4px"></div>
<div class="r o" style="top:740px"><i>选中小素材</i><b>按住<u>Ctrl</u>键后点击素材</b></div>
<div class="r e" style="top:764px"><i>等比例缩放素材</i><b>按住<u>Alt</u>键后缩放素材</b></div>
<div class="r o" style="top:788px"><i>素材的1像素位移</i><b>上下左右键</b></div>
<div class="r e" style="top:812px"><i>素材的1度转动</i><b><u>Page up/Page dwon</u>键</b></div>
<div class="r o" style="top:836px"><i>素材的10度转动</i><b>滚动一次鼠标滑轮</b></div>
<div class="r e" style="top:860px"><i>关闭素材缩放功能</i><b>在白画布上右键-锁定素材</b></div>
<div class="r o" style="top:884px"><i>固定住素材</i><b>在单个素材上右键-锁定</b></div>
<div class="t" style="left:962px;top:919px;font-size:14.700px;font-weight:900;line-height:20px;color:#e8643c;-webkit-text-stroke:2.500px #fff;paint-order:stroke fill">使用<span style="font-weight:700;font-size:15.200px;letter-spacing:.1px">windows64</span>位系统可有效减少内存不足现<br>象和由此引起的软件崩溃 。</div>
<!-- 画布排版 window -->
<div class="win" style="left:8px;top:554px;width:416px;height:452px;background:linear-gradient(90deg,#cfe3f8 0,#b9d6f5 110px,#a9ccf2 200px,#b4d3f5 258px,#6ea7dd 267px,#5b99d4 274px,#6ea7dd 281px,#c0daf7 291px,#cfe4fa 416px)">
 <div class="a" style="left:1px;top:29px;width:6px;bottom:7px;background:linear-gradient(180deg,#c5dcf5 0,#bdd8f6 110px,#8fa9c8 115px,#8099b8 100%)"></div>
 <div class="a" style="right:1px;top:29px;width:6px;bottom:7px;background:linear-gradient(180deg,#d3e6fa 0,#cfe3fa 110px,#a9c9ee 112px,#93adcd 180px,#869fbf 100%)"></div>
 <div class="a" style="left:1px;right:1px;bottom:1px;height:7px;border-radius:0 0 6px 6px;background:#8ca6c6"></div>
 <div class="close" style="right:5px"><span>x</span></div>
</div>
<svg style="left:15px;top:561px" width="16" height="16" viewBox="0 0 16 16"><rect x=".5" y=".5" width="15" height="15" rx="1.500" fill="#555"/><rect x="1" y="1" width="14" height="2.600" fill="#e0603a"/><rect x="1" y="12.500" width="14" height="2.500" fill="#e0603a"/><rect x="2.500" y="5" width="4.500" height="3" fill="none" stroke="#d8c23a" stroke-width="1"/><rect x="2.500" y="9.200" width="4.500" height="2" fill="#ddd"/><rect x="8.500" y="5" width="5" height="6.200" fill="#4a6a3a" stroke="#6aa84a" stroke-width=".8"/></svg>
<div class="t" style="left:36px;top:562px;font-size:12px;line-height:15px">画布排版</div>
<div class="wc" style="left:14px;top:582.500px;width:403px;height:417.500px;background:#fff"></div>
<div class="a" style="left:15px;top:583px;width:401px;height:70px;background:linear-gradient(180deg,#166aa9 0,#176eaf 45%,#1c80c6 100%)"></div>
<div class="a" style="left:15px;top:653px;width:401px;height:42px;background:#ade0fb"></div>
<div class="a" style="left:15px;top:695px;width:401px;height:3px;background:linear-gradient(180deg,#6b7780,#4a565f)"></div>
<div class="lb" style="left:29px;top:596px">画布名称:</div>
<div class="lb" style="left:29px;top:626px">画布尺寸:</div>
<div class="inp" style="left:95.700px;top:595px;width:215px;height:23px;font-size:13px;line-height:23px">新作品1</div>
<div class="inp" style="left:95.700px;top:625px;width:49.700px;height:21px;font-size:12px;line-height:21px">2000</div>
<div class="lb" style="left:150px;top:629px;font-size:17px">*</div>
<div class="inp" style="left:160.500px;top:625px;width:49.800px;height:21px;font-size:12px;line-height:21px">1500</div>
<div class="a" style="left:218px;top:628px;width:13px;height:13px;background:linear-gradient(135deg,#dfe3ea,#fff);border:1px solid #8e8f8f;box-shadow:inset 0 0 0 1px #f4f4f4"></div>
<svg style="left:218px;top:628px" width="13" height="13" viewBox="0 0 13 13"><path d="M3.200 6.500L5.500 9.800L10 2.800" fill="none" stroke="#3a4a8a" stroke-width="1.700"/></svg>
<div class="t" style="left:235px;top:628px;font-size:12px;line-height:15px;color:#000">显示分格</div>
<!-- 尺寸建议 -->
<svg class="ol" style="left:334px;top:592px" width="56" height="56" viewBox="334 592 56 56" stroke-linejoin="round">
 <path d="M382 598.500V629H348.500Z" fill="#f0603a" stroke="#4a3a30" stroke-width="1.200"/>
 <path d="M345.300 607L351 599.600L382.300 622.500L377.500 629.500Z" fill="#f4cd22" stroke="#4a3a30" stroke-width="1.200"/>
 <path d="M353.600 602.300L352 604.500M356.400 604.400L355.300 605.900M359.200 606.400L357.600 608.600M362 608.500L360.900 610M364.800 610.500L363.200 612.700M367.600 612.600L366.500 614.100M370.400 614.600L368.800 616.800M373.200 616.700L372.100 618.200M376 618.700L374.400 620.900M378.800 620.800L377.700 622.300" stroke="#8a6a1a" stroke-width=".8"/>
</svg>
<div class="t" style="left:338.500px;top:628px;font-size:12px;font-weight:900;line-height:18px;color:#3a3a3a;-webkit-text-stroke:2.500px #fff;paint-order:stroke fill;letter-spacing:-.2px">尺寸建议</div>
<div class="a" style="left:26px;top:662px;width:73px;height:27px;border:1px solid #e8f6fe"></div>
<div class="gb" style="left:28px;width:69px">生成画布</div>
<div class="gb" style="left:104px;width:44px">清除</div>
<div class="gb" style="left:160px;width:70px">生成图片</div>
<div class="gb" style="left:237px;width:70px">加载画布</div>
<!-- status bar content -->
<svg style="left:11px;top:1010px" width="14" height="14" viewBox="0 0 14 14"><circle cx="7" cy="7" r="6.500" fill="#2a62c8" stroke="#9ab4e0" stroke-width="1"/><ellipse cx="7" cy="4.500" rx="5" ry="3" fill="rgba(255,255,255,.25)"/><text x="7" y="11" font-size="10.500" font-weight="700" fill="#fff" text-anchor="middle" font-family="Liberation Sans,sans-serif">?</text></svg>
<div class="t" style="left:29px;top:1010px;font-size:12px;line-height:15px">拼图工具: 拼图工具</div>
<div class="a" style="left:1112px;top:1007px;width:1px;height:19px;background:#a8a8a8"></div>
<div class="a" style="left:1248px;top:1007px;width:1px;height:19px;background:#a8a8a8"></div>
<div class="a" style="left:1384px;top:1007px;width:1px;height:19px;background:#a8a8a8"></div>
<svg style="left:1251px;top:1008px" width="18" height="18" viewBox="0 0 18 18" fill="none" stroke="#222" stroke-width="1"><path d="M6.500 2.500H15.500M13.500 .5L15.500 2.500L13.500 4.500M6.500 .5V4.500"/><path d="M2.500 6.500V15.500M.5 13.500L2.500 15.500L4.500 13.500M.5 16.500H4.500"/><path d="M6.500 6.500H12.500L15.500 9.500V16.500H6.500Z" fill="#eef2fa" stroke="#7a8aa8"/><path d="M12.500 6.500V9.500H15.500" stroke="#7a8aa8"/></svg>
<svg style="left:1387px;top:1008px" width="18" height="18" viewBox="0 0 18 18" fill="none" stroke="#222" stroke-width="1"><path d="M3.500 .5V7.500M.5 3.500H7.500"/><path d="M8.500 3.500H16.500M3.500 8.500V16.500" stroke-dasharray="1 1"/><path d="M6.500 6.500H12.500L15.500 9.500V16.500H6.500Z" fill="#eef2fa" stroke="#7a8aa8"/><path d="M12.500 6.500V9.500H15.500" stroke="#7a8aa8"/></svg>
<div class="t" style="left:1271px;top:1010px;font-size:12px;line-height:15px;letter-spacing:.38px">1600 x 1200</div>
<div class="t" style="left:1407px;top:1010px;font-size:12px;line-height:15px;letter-spacing:.32px">971, 276</div>
<svg style="left:1518px;top:1013px" width="14" height="14" viewBox="0 0 14 14" fill="#a9a9a9"><rect x="9" y="1" width="2" height="2"/><rect x="5" y="5" width="2" height="2"/><rect x="9" y="5" width="2" height="2"/><rect x="1" y="9" width="2" height="2"/><rect x="5" y="9" width="2" height="2"/><rect x="9" y="9" width="2" height="2"/></svg>
</body></html>
